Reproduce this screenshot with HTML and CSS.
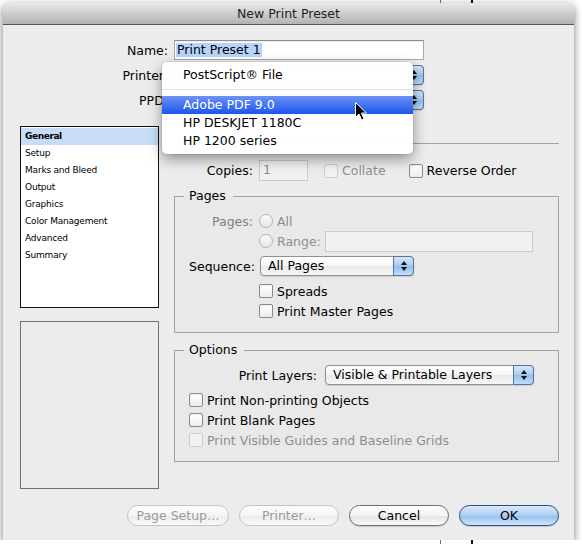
FILE: index.html
```html
<!DOCTYPE html>
<html>
<head>
  <title>New Print Preset</title>
  <meta charset="utf-8">
  <link rel="stylesheet" href="styles.css">
</head>
<body>

  <div class="window">
    <div class="titlebar">New Print Preset</div>

    <!-- Name / Printer / PPD -->
    <div class="preset-form">
      <span class="label">Name:</span>
      <div class="text-field"><span class="selected-text">Print Preset 1</span></div>
      <span class="label">Printer:</span>
      <div class="popup"><span class="popup-value"></span><span class="popup-arrows"></span></div>
      <span class="label">PPD:</span>
      <div class="popup"><span class="popup-value"></span><span class="popup-arrows"></span></div>
    </div>

    <div class="main">
      <div class="side">
        <ul class="category-list">
          <li class="selected">General</li>
          <li>Setup</li>
          <li>Marks and Bleed</li>
          <li>Output</li>
          <li>Graphics</li>
          <li>Color Management</li>
          <li>Advanced</li>
          <li>Summary</li>
        </ul>
        <div class="preview"></div>
      </div>

      <div class="settings">
        <hr class="separator">

        <div class="copies-row">
          <span class="field-label">Copies:</span>
          <div class="text-field copies disabled">1</div>
          <span class="check disabled collate"><span class="box"></span>Collate</span>
          <span class="check reverse"><span class="box"></span>Reverse Order</span>
        </div>

        <!-- Pages -->
        <fieldset class="group pages-group">
          <legend>Pages</legend>
          <div class="group-body">
            <div class="row">
              <span class="field-label disabled">Pages:</span>
              <span class="radio disabled"><span class="dot"></span>All</span>
            </div>
            <div class="row indent">
              <span class="radio disabled"><span class="dot"></span>Range:</span>
              <div class="text-field range disabled"></div>
            </div>
            <div class="row spaced">
              <span class="field-label">Sequence:</span>
              <div class="popup sequence"><span class="popup-value">All Pages</span><span class="popup-arrows"></span></div>
            </div>
            <div class="row spaced indent">
              <span class="check"><span class="box"></span>Spreads</span>
            </div>
            <div class="row indent">
              <span class="check"><span class="box"></span>Print Master Pages</span>
            </div>
          </div>
        </fieldset>

        <!-- Options -->
        <fieldset class="group options-group">
          <legend>Options</legend>
          <div class="group-body">
            <div class="row">
              <span class="layers-label">Print Layers:</span>
              <div class="popup layers"><span class="popup-value">Visible &amp; Printable Layers</span><span class="popup-arrows"></span></div>
            </div>
            <div class="row spaced">
              <span class="check"><span class="box"></span>Print Non-printing Objects</span>
            </div>
            <div class="row">
              <span class="check"><span class="box"></span>Print Blank Pages</span>
            </div>
            <div class="row">
              <span class="check disabled"><span class="box"></span>Print Visible Guides and Baseline Grids</span>
            </div>
          </div>
        </fieldset>
      </div>
    </div>

    <div class="buttons">
      <button class="button wide" disabled>Page Setup…</button>
      <button class="button" disabled>Printer…</button>
      <button class="button">Cancel</button>
      <button class="button default">OK</button>
    </div>

    <!-- open Printer menu -->
    <ul class="popup-menu">
      <li>PostScript® File</li>
      <li class="menu-separator"></li>
      <li class="hover">Adobe PDF 9.0</li>
      <li>HP DESKJET 1180C</li>
      <li>HP 1200 series</li>
    </ul>

    <svg class="cursor" width="14" height="21" viewBox="0 0 14 21">
      <path d="M1.5 1.5 L1.5 16.5 L5 13 L7.6 19 L10 18 L7.5 12 L12.5 12 Z" fill="#000" stroke="#fff" stroke-width="1"/>
    </svg>
  </div>

</body>
</html>
```

FILE: styles.css
```css
body {
  margin: 0;
  background: linear-gradient(to right, transparent 440px, #8e52e4 440px, #8e52e4 441px, transparent 441px, transparent 471px, #111 471px, #111 473px, transparent 473px), #fff;
  font-family: 'DejaVu Sans', 'Lucida Grande', sans-serif;
  font-size: 12.5px;
  color: #000;
}

.window {
  position: relative;
  width: 571px;
  height: 537px;
  margin: 3px 0 0 3px;
  background: #ececec;
  border-radius: 5px 5px 0 0;
  box-shadow: 0 3px 9px rgba(0, 0, 0, 0.55);
}

.titlebar {
  height: 21px;
  line-height: 21px;
  text-align: center;
  color: #1e1e1e;
  background: linear-gradient(#e8e8e8, #b3b3b3);
  border-bottom: 1px solid #555;
  border-radius: 5px 5px 0 0;
}

/* top form */
.preset-form {
  display: grid;
  grid-template-columns: 165px 250px;
  grid-auto-rows: 20px;
  column-gap: 6px;
  row-gap: 5px;
  align-items: center;
  margin-top: 15px;
}

.label {
  text-align: right;
}

.text-field {
  height: 20px;
  box-sizing: border-box;
  background: #fff;
  border: 1px solid #a8a8a8;
  border-top-color: #8c8c8c;
  padding-left: 1px;
  line-height: 18px;
  box-shadow: inset 0 1px 1px rgba(0, 0, 0, 0.08);
  white-space: nowrap;
}

.text-field.disabled {
  background: #f1f1f1;
  border-color: #cbcbcb;
  color: #8a8a8a;
  box-shadow: none;
}

.selected-text {
  display: inline-block;
  vertical-align: top;
  margin-top: 2px;
  padding: 0 1px;
  line-height: 14px;
  background: #b6d4fb;
}

/* popup buttons */
.popup {
  display: flex;
  height: 20px;
  box-sizing: border-box;
  border: 1px solid #8f8f8f;
  border-radius: 4px;
  background: linear-gradient(#fefefe, #f5f5f5 50%, #e9e9e9 51%, #f7f7f7);
  box-shadow: 0 1px 1px rgba(0, 0, 0, 0.12);
}

.popup-value {
  flex: 1;
  padding-left: 7px;
  line-height: 18px;
  white-space: nowrap;
}

.popup-arrows {
  width: 19px;
  margin: -1px -1px -1px 0;
  border: 1px solid #56729f;
  border-radius: 0 4px 4px 0;
  background: linear-gradient(#d6e7fa, #a9caef 50%, #92bdec 51%, #c3def8);
  display: flex;
  flex-direction: column;
  align-items: center;
  justify-content: center;
  gap: 2px;
}

.popup-arrows::before {
  content: '';
  border: 3px solid transparent;
  border-top: 0;
  border-bottom: 4px solid #111;
}

.popup-arrows::after {
  content: '';
  border: 3px solid transparent;
  border-bottom: 0;
  border-top: 4px solid #111;
}

/* main area */
.main {
  display: flex;
  align-items: flex-start;
  gap: 15px;
  margin-top: 16px;
  padding-left: 17px;
}

.side {
  width: 139px;
  display: flex;
  flex-direction: column;
  gap: 13px;
}

.category-list {
  margin: 0;
  padding: 1px 0 0;
  list-style: none;
  height: 182px;
  box-sizing: border-box;
  background: #fff;
  border: 1px solid #111;
  font-size: 9px;
  letter-spacing: -0.2px;
}

.category-list li {
  height: 17px;
  line-height: 17px;
  padding-left: 4px;
}

.category-list .selected {
  background: #c6dcf7;
  font-weight: bold;
  letter-spacing: -0.4px;
}

.preview {
  height: 168px;
  box-sizing: border-box;
  border: 1px solid #6f6f6f;
}

.settings {
  width: 385px;
  padding-top: 17px;
}

.separator {
  margin: 0;
  border: 0;
  border-top: 1px solid #a3a3a3;
}

.copies-row {
  display: flex;
  align-items: center;
  height: 21px;
  margin-top: 16px;
}

.field-label {
  width: 79px;
  margin-right: 6px;
  text-align: right;
}

.field-label.disabled {
  color: #808080;
}

.text-field.copies {
  width: 49px;
  height: 21px;
  padding-left: 3px;
}

.check, .radio {
  display: flex;
  align-items: center;
  gap: 4px;
  white-space: nowrap;
}

.collate {
  margin-left: 16px;
}

.reverse {
  margin-left: 23px;
}

.box {
  width: 14px;
  height: 14px;
  box-sizing: border-box;
  border: 1px solid #8a8a8a;
  border-radius: 2px;
  background: linear-gradient(#fff, #ededed);
  box-shadow: inset 0 1px 1px rgba(0, 0, 0, 0.06);
}

.dot {
  width: 14px;
  height: 14px;
  box-sizing: border-box;
  border: 1px solid #b3b3b3;
  border-radius: 50%;
  background: linear-gradient(#fafafa, #e6e6e6);
}

.check.disabled, .radio.disabled {
  color: #8e8e8e;
}

.check.disabled .box {
  border-color: #cdcdcd;
  background: #f2f2f2;
  box-shadow: none;
}

/* group boxes */
.group {
  margin: 7px 0 0;
  padding: 7px 0 11px 9px;
  border: 1px solid #a3a3a3;
  min-width: 0;
  background: rgba(0, 0, 0, 0.012);
}

.group legend {
  padding: 0 7px 0 5px;
  line-height: 16px;
}

.options-group {
  margin-top: 9px;
}

.group-body {
  padding-left: 5px;
}

.row {
  display: flex;
  align-items: center;
  height: 20px;
}

.row.spaced {
  margin-top: 5px;
}

.pages-group .field-label {
  width: 64px;
}

.row.indent {
  padding-left: 70px;
}

.text-field.range {
  width: 208px;
  height: 21px;
  margin-left: 4px;
}

.popup.sequence {
  width: 154px;
  margin-left: 1px;
}

.layers-label {
  width: 128px;
  margin-right: 8px;
  text-align: right;
}

.popup.layers {
  width: 209px;
}

/* bottom buttons */
.buttons {
  display: flex;
  justify-content: flex-end;
  gap: 10px;
  margin-top: 16px;
  padding-right: 15px;
}

.button {
  width: 100px;
  height: 21px;
  box-sizing: border-box;
  padding: 0;
  border: 1px solid #6e6e6e;
  border-radius: 11px;
  background: linear-gradient(#fefefe, #f3f3f3 50%, #e3e3e3 51%, #fbfbfb);
  box-shadow: 0 1px 1px rgba(0, 0, 0, 0.15);
  font: inherit;
  line-height: 19px;
  color: #000;
  text-align: center;
}

.button.wide {
  width: 102px;
}

.button:disabled {
  border-color: #c4c4c4;
  color: #9a9a9a;
  background: linear-gradient(#fdfdfd, #f4f4f4 50%, #ececec 51%, #f9f9f9);
  box-shadow: none;
}

.button.default {
  border-color: #2b4a86;
  background: linear-gradient(#d9e9fa, #abcdf1 50%, #93bfee 51%, #cfe6fb);
}

/* open menu over the Printer popup */
.popup-menu {
  position: absolute;
  left: 159px;
  top: 59px;
  width: 251px;
  margin: 0;
  padding: 4px 0;
  list-style: none;
  background: rgba(255, 255, 255, 0.97);
  border-radius: 5px;
  box-shadow: 0 5px 14px rgba(0, 0, 0, 0.4), 0 0 0 1px rgba(0, 0, 0, 0.06);
}

.popup-menu li {
  height: 18px;
  line-height: 18px;
  padding-left: 21px;
  white-space: nowrap;
}

.popup-menu .menu-separator {
  height: 1px;
  margin: 5px 0 6px;
  padding: 0;
  background: #e2e2e2;
}

.popup-menu .hover {
  background: linear-gradient(#6d91f6, #1b57ea);
  color: #fff;
}

.cursor {
  position: absolute;
  left: 351px;
  top: 98px;
}
```
